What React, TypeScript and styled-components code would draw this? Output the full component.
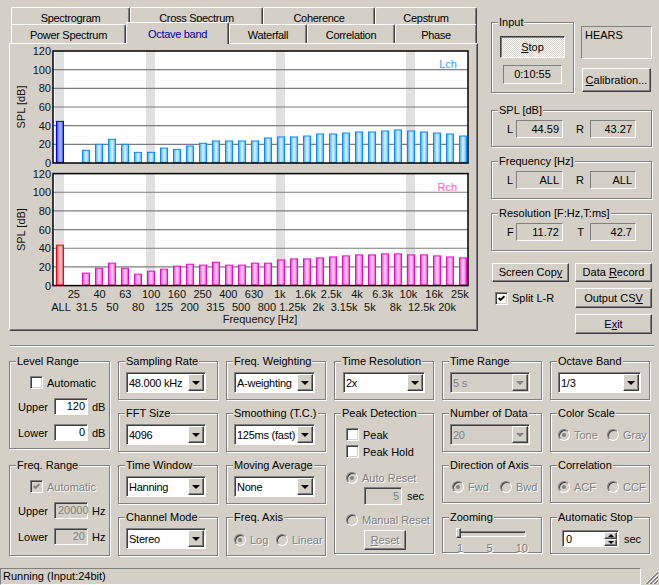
import React from 'react';
import styled, { createGlobalStyle, css } from 'styled-components';

const FACE = '#d4d0c8';
const SHADOW = '#808080';
const DARK = '#404040';

// 1/3 octave bands, first slot is the overall level
const BANDS = [
  'ALL', '25', '31.5', '40', '50', '63', '80', '100', '125', '160', '200', '250', '315', '400', '500', '630',
  '800', '1k', '1.25k', '1.6k', '2k', '2.5k', '3.15k', '4k', '5k', '6.3k', '8k', '10k', '12.5k', '16k', '20k', '25k',
];
const LCH = [
  44.6, 0, 13.6, 20, 25.4, 20, 11.4, 11.4, 16, 14.6, 18.2, 21.1, 23.6, 23.6, 23.6, 23.6,
  26.8, 27.9, 27.9, 28.9, 31.1, 31.1, 32.1, 33.2, 33.2, 34.3, 35.4, 34.3, 33.2, 32.1, 31.1, 28.9,
];
const RCH = [
  43.3, 0, 13.3, 18.6, 24, 18.6, 12.2, 15.4, 17.6, 20.8, 22.9, 21.9, 25, 21.9, 21.9, 24,
  24, 27.5, 28.6, 28.6, 29.7, 30.7, 31.8, 32.9, 32.9, 34, 34, 32.9, 32.9, 31.8, 30.7, 29.7,
];
const MARKED = [0, 7, 17, 27];

const GlobalStyle = createGlobalStyle`
  html, body { margin: 0; padding: 0; background: ${FACE}; }
  body { font-family: "Liberation Sans", Arial, sans-serif; font-size: 11px; color: #000; }
  * { box-sizing: border-box; }
`;

const raised = css`
  border: 1px solid;
  border-color: #fff ${DARK} ${DARK} #fff;
  box-shadow: inset -1px -1px ${SHADOW};
`;
const sunken = css`
  border: 1px solid;
  border-color: ${SHADOW} #fff #fff ${SHADOW};
  box-shadow: inset 1px 1px ${DARK};
`;
const thinSunken = css`
  border: 1px solid;
  border-color: ${SHADOW} #fff #fff ${SHADOW};
`;
const grayed = css`
  color: ${SHADOW};
  text-shadow: 1px 1px #fff;
`;

const Window = styled.div`
  width: 659px;
  height: 585px;
  display: flex;
  flex-direction: column;
  background: ${FACE};
  overflow: hidden;
`;

const TopArea = styled.div`
  display: flex;
  height: 345px;
  flex: none;
  padding: 7px 0 0 9px;
`;

/* ---------- tabs ---------- */

const TabControl = styled.div`
  width: 469px;
  display: flex;
  flex-direction: column;
`;

const TabRow = styled.div<{ $front?: boolean }>`
  display: flex;
  align-items: flex-end;
  padding-left: 2px;
  height: ${p => (p.$front ? 21 : 19)}px;
  ${p => p.$front && css`
    margin-top: -4px;
    position: relative;
    z-index: 1;
  `}
`;

const Tab = styled.div<{ $w: number; $active?: boolean }>`
  width: ${p => p.$w}px;
  height: ${p => (p.$active ? 22 : 19)}px;
  margin-bottom: ${p => (p.$active ? -1 : 0)}px;
  flex: none;
  background: ${FACE};
  border-top: 1px solid #fff;
  border-left: 1px solid #fff;
  border-right: 1px solid ${DARK};
  box-shadow: inset -1px 0 ${SHADOW};
  border-radius: 2px 2px 0 0;
  padding-top: ${p => (p.$active ? 5 : 4)}px;
  line-height: 13px;
  text-align: center;
  white-space: nowrap;
  letter-spacing: -0.3px;
  color: ${p => (p.$active ? '#0000a8' : '#000')};
`;

const TabPanel = styled.div`
  width: 469px;
  height: 288px;
  border: 1px solid;
  border-color: #fff ${DARK} ${DARK} #fff;
  box-shadow: inset -1px -1px ${SHADOW};
`;

const ChartSvg = styled.svg`
  display: block;
  font-family: "Liberation Sans", Arial, sans-serif;
  font-size: 11px;
  fill: #111;
`;

type Scheme = { stroke: string; grad: string; allStroke: string; allGrad: string; text: string };
const LEFT: Scheme = { stroke: '#0a88ff', grad: 'gBlue', allStroke: '#0000ff', allGrad: 'gBlueAll', text: '#3a9cff' };
const RIGHT: Scheme = { stroke: '#e010c0', grad: 'gPink', allStroke: '#ff0000', allGrad: 'gRedAll', text: '#ff5cc8' };

const PLOT_X = 53;
const PLOT_W = 415;
const PLOT_H = 112;
const DB = PLOT_H / 120;

const Plot: React.FC<{ top: number; values: number[]; scheme: Scheme; label: string }> = ({ top, values, scheme, label }) => {
  const base = top + PLOT_H;
  return (
    <g>
      <rect x={PLOT_X} y={top} width={PLOT_W} height={PLOT_H} fill="#fff" />
      {MARKED.map(i => (
        <rect key={i} x={55 + 13 * i} y={top} width={9} height={PLOT_H} fill="#e0e0e0" />
      ))}
      {[20, 40, 60, 80, 100].map(db => (
        <line key={db} x1={PLOT_X} x2={PLOT_X + PLOT_W} y1={base - db * DB} y2={base - db * DB} stroke="#7c7c7c" strokeWidth={1.2} />
      ))}
      {values.map((v, i) =>
        v > 0 ? (
          <rect
            key={i}
            x={56.5 + 13 * i}
            y={base - v * DB}
            width={7}
            height={v * DB - 0.6}
            fill={`url(#${i === 0 ? scheme.allGrad : scheme.grad})`}
            stroke={i === 0 ? scheme.allStroke : scheme.stroke}
          />
        ) : null,
      )}
      <rect x={PLOT_X} y={top} width={PLOT_W} height={PLOT_H} fill="none" stroke="#000" strokeWidth={1.5} />
      {[0, 20, 40, 60, 80, 100, 120].map(db => (
        <text key={db} x={51} y={base - db * DB + 4} textAnchor="end">{db}</text>
      ))}
      <text transform={`translate(25 ${top + 56}) rotate(-90)`} textAnchor="middle">SPL [dB]</text>
      <text x={457} y={top + 17} textAnchor="end" style={{ fill: scheme.text }}>{label}</text>
    </g>
  );
};

const Stripes: React.FC<{ id: string; edge: string; mid: string; light: string }> = ({ id, edge, mid, light }) => (
  <linearGradient id={id} x1="0" x2="1" y1="0" y2="0">
    <stop offset="0" stopColor={edge} />
    <stop offset="0.3" stopColor={mid} />
    <stop offset="0.5" stopColor={light} />
    <stop offset="0.75" stopColor={mid} />
    <stop offset="1" stopColor={edge} />
  </linearGradient>
);

const OctaveChart: React.FC = () => (
  <ChartSvg width={466} height={285} viewBox="10 44 466 285">
    <defs>
      <Stripes id="gBlue" edge="#38acff" mid="#9ad6ff" light="#dff3ff" />
      <Stripes id="gBlueAll" edge="#2a3cff" mid="#7c8cff" light="#b8c2ff" />
      <Stripes id="gPink" edge="#f030d0" mid="#ff98e8" light="#ffd6f6" />
      <Stripes id="gRedAll" edge="#ff3a5a" mid="#ff9aa8" light="#ffd0d4" />
    </defs>
    <Plot top={51} values={LCH} scheme={LEFT} label="Lch" />
    <Plot top={173.6} values={RCH} scheme={RIGHT} label="Rch" />
    {BANDS.map((b, i) => (
      <text key={b} x={61 + 12.87 * i} y={i % 2 ? 298 : 311} textAnchor="middle">{b}</text>
    ))}
    <text x={260} y={323} textAnchor="middle">Frequency [Hz]</text>
  </ChartSvg>
);

/* ---------- common controls ---------- */

const GroupBox = styled.div<{ $w?: number; $h: number; $mt?: number; $col?: number; $row?: number; $span?: number }>`
  position: relative;
  width: ${p => (p.$w ? `${p.$w}px` : '100%')};
  height: ${p => p.$h}px;
  margin-top: ${p => p.$mt ?? 0}px;
  flex: none;
  align-self: start;
  border: 1px solid ${SHADOW};
  box-shadow: inset 1px 1px #fff, 1px 1px #fff;
  ${p => p.$col && css`grid-column: ${p.$col};`}
  ${p => p.$row && css`grid-row: ${p.$row} / span ${p.$span ?? 1};`}
`;

const Caption = styled.span`
  position: absolute;
  top: -7px;
  left: 6px;
  padding: 0 1px;
  background: ${FACE};
  line-height: 13px;
  white-space: nowrap;
`;

const Button = styled.button<{ $w: number; $h: number; $pressed?: boolean }>`
  width: ${p => p.$w}px;
  height: ${p => p.$h}px;
  flex: none;
  margin: 0;
  padding: 0;
  font: inherit;
  color: #000;
  background: ${FACE};
  line-height: 13px;
  white-space: nowrap;
  ${p => (p.$pressed
    ? css`
      border: 1px solid;
      border-color: ${DARK} #fff #fff ${DARK};
      box-shadow: inset 1px 1px ${SHADOW};
      background: repeating-conic-gradient(#fff 0 25%, ${FACE} 0 50%) 0 0 / 2px 2px;
      padding-top: 1px;
    `
    : raised)}
  &:disabled {
    ${grayed}
  }
`;

const CheckBoxFrame = styled.span<{ $disabled?: boolean }>`
  width: 13px;
  height: 13px;
  flex: none;
  display: inline-flex;
  align-items: center;
  justify-content: center;
  border: 1px solid;
  border-color: ${SHADOW} #fff #fff ${SHADOW};
  box-shadow: inset 1px 1px ${DARK}, inset -1px -1px ${FACE};
  background: ${p => (p.$disabled ? FACE : '#fff')};
`;

const ChoiceRow = styled.div<{ $ml?: number; $mt?: number; $w?: number; $disabled?: boolean }>`
  display: flex;
  align-items: center;
  gap: 4px;
  height: 13px;
  flex: none;
  margin-left: ${p => p.$ml ?? 0}px;
  margin-top: ${p => p.$mt ?? 0}px;
  ${p => p.$w && css`width: ${p.$w}px;`}
  white-space: nowrap;
  ${p => p.$disabled && grayed}
`;

const Check: React.FC<{ label: string; checked?: boolean; disabled?: boolean; ml?: number; mt?: number }> = ({ label, checked, disabled, ml, mt }) => (
  <ChoiceRow $ml={ml} $mt={mt} $disabled={disabled}>
    <CheckBoxFrame $disabled={disabled}>
      {checked && (
        <svg width="7" height="7" viewBox="0 0 7 7">
          <polyline points="0.6,3 2.6,5 6.4,1.2" fill="none" stroke={disabled ? SHADOW : '#000'} strokeWidth={1.9} />
        </svg>
      )}
    </CheckBoxFrame>
    <span>{label}</span>
  </ChoiceRow>
);

const RadioCircle = styled.span<{ $disabled?: boolean }>`
  width: 12px;
  height: 12px;
  flex: none;
  border-radius: 50%;
  display: inline-flex;
  align-items: center;
  justify-content: center;
  border: 1px solid;
  border-color: ${SHADOW} #fff #fff ${SHADOW};
  box-shadow: inset 1px 1px ${DARK};
  background: ${p => (p.$disabled ? FACE : '#fff')};
`;

const RadioDot = styled.span`
  width: 4px;
  height: 4px;
  border-radius: 50%;
  background: ${SHADOW};
`;

const Radio: React.FC<{ label: string; on?: boolean; w?: number; ml?: number; mt?: number }> = ({ label, on, w, ml, mt }) => (
  <ChoiceRow $w={w} $ml={ml} $mt={mt} $disabled>
    <RadioCircle $disabled>{on && <RadioDot />}</RadioCircle>
    <span>{label}</span>
  </ChoiceRow>
);

const EditBox = styled.div<{ $w: number; $h?: number; $disabled?: boolean; $left?: boolean }>`
  width: ${p => p.$w}px;
  height: ${p => p.$h ?? 17}px;
  flex: none;
  ${sunken}
  background: ${p => (p.$disabled ? FACE : '#fff')};
  color: ${p => (p.$disabled ? SHADOW : '#000')};
  text-align: ${p => (p.$left ? 'left' : 'right')};
  padding: 0 2px 0 3px;
  line-height: ${p => (p.$h ?? 17) - 2}px;
`;

const ComboFrame = styled.div<{ $w: number; $disabled?: boolean }>`
  width: ${p => p.$w}px;
  height: 21px;
  display: flex;
  align-items: center;
  ${sunken}
  padding: 0 1px 0 2px;
  background: ${p => (p.$disabled ? FACE : '#fff')};
  color: ${p => (p.$disabled ? SHADOW : '#000')};
`;

const ComboText = styled.span`
  flex: 1;
  min-width: 0;
  white-space: nowrap;
  letter-spacing: -0.25px;
`;

const DropButton = styled.span`
  width: 16px;
  height: 17px;
  flex: none;
  display: flex;
  align-items: center;
  justify-content: center;
  background: ${FACE};
  ${raised}
`;

const Arrow = styled.span<{ $disabled?: boolean; $up?: boolean; $size?: number }>`
  width: 0;
  height: 0;
  border-left: ${p => p.$size ?? 4}px solid transparent;
  border-right: ${p => p.$size ?? 4}px solid transparent;
  ${p => (p.$up ? 'border-bottom' : 'border-top')}: ${p => p.$size ?? 4}px solid ${p => (p.$disabled ? SHADOW : '#000')};
`;

const Combo: React.FC<{ value: string; w?: number; disabled?: boolean }> = ({ value, w = 81, disabled }) => (
  <ComboFrame $w={w} $disabled={disabled}>
    <ComboText>{value}</ComboText>
    <DropButton>
      <Arrow $disabled={disabled} />
    </DropButton>
  </ComboFrame>
);

/* ---------- right panel ---------- */

const SidePanel = styled.div`
  width: 161px;
  margin-left: 13px;
  padding-top: 15px;
  display: flex;
  flex-direction: column;
`;

const InputRow = styled.div`
  display: flex;
  align-items: flex-start;
`;

const InputBody = styled.div`
  display: flex;
  flex-direction: column;
  align-items: center;
  gap: 7px;
  padding-top: 13px;
`;

const ClockBox = styled.div`
  width: 59px;
  height: 19px;
  ${thinSunken}
  text-align: center;
  line-height: 17px;
`;

const SideColumn = styled.div`
  display: flex;
  flex-direction: column;
  align-items: flex-start;
  margin-left: 7px;
  padding-top: 4px;
  gap: 9px;
`;

const NameBox = styled.div`
  width: 71px;
  height: 33px;
  ${thinSunken}
  padding: 2px 3px;
  line-height: 13px;
`;

const ReadoutRow = styled.div`
  display: flex;
  align-items: center;
  padding: 9px 0 0 15px;
`;

const ReadoutLabel = styled.span<{ $w: number; $right?: boolean }>`
  width: ${p => p.$w}px;
  flex: none;
  text-align: ${p => (p.$right ? 'right' : 'left')};
  padding-right: ${p => (p.$right ? 6 : 0)}px;
`;

const Readout = styled.div<{ $w: number }>`
  width: ${p => p.$w}px;
  height: 18px;
  flex: none;
  ${thinSunken}
  text-align: right;
  padding-right: 3px;
  line-height: 16px;
`;

const ActionGrid = styled.div`
  display: grid;
  grid-template-columns: 77px 77px;
  grid-template-rows: 19px 20px 20px;
  column-gap: 6px;
  row-gap: 6px;
  align-items: center;
  margin-top: 12px;
  padding-left: 1px;
`;

const ReadoutGroup: React.FC<{ title: string; a: [string, string]; b: [string, string]; mt: number; h: number }> = ({ title, a, b, mt, h }) => (
  <GroupBox $h={h} $mt={mt}>
    <Caption>{title}</Caption>
    <ReadoutRow>
      <ReadoutLabel $w={9}>{a[0]}</ReadoutLabel>
      <Readout $w={47}>{a[1]}</Readout>
      <ReadoutLabel $w={27} $right>{b[0]}</ReadoutLabel>
      <Readout $w={46}>{b[1]}</Readout>
    </ReadoutRow>
  </GroupBox>
);

/* ---------- lower settings ---------- */

const Separator = styled.div`
  height: 2px;
  flex: none;
  margin: 0 5px 0 10px;
  border-top: 1px solid ${SHADOW};
  border-bottom: 1px solid #fff;
`;

const ControlGrid = styled.div`
  display: grid;
  grid-template-columns: 101px repeat(5, 100px);
  grid-template-rows: repeat(4, 39px);
  column-gap: 8px;
  row-gap: 13px;
  margin-top: 14px;
  padding-left: 9px;
`;

const Body = styled.div<{ $pt: number; $pl: number; $row?: boolean }>`
  display: flex;
  flex-direction: ${p => (p.$row ? 'row' : 'column')};
  align-items: ${p => (p.$row ? 'center' : 'flex-start')};
  padding: ${p => p.$pt}px 0 0 ${p => p.$pl}px;
`;

const FieldRow = styled.div`
  display: flex;
  align-items: center;
  height: 17px;
  margin-top: 9px;
`;

const FieldLabel = styled.span`
  width: 36px;
  flex: none;
`;

const Unit = styled.span<{ $ml?: number; $disabled?: boolean }>`
  margin-left: ${p => p.$ml ?? 4}px;
  ${p => p.$disabled && grayed}
`;

const Indented = styled.div<{ $mt: number }>`
  display: flex;
  align-items: center;
  margin: ${p => p.$mt}px 0 0 18px;
`;

const SliderTrack = styled.div`
  position: relative;
  width: 70px;
  height: 10px;
  &::before {
    content: '';
    position: absolute;
    left: 0;
    right: 0;
    top: 3px;
    height: 4px;
    ${sunken}
    background: ${FACE};
  }
`;

const SliderThumb = styled.span`
  position: absolute;
  left: 0;
  top: 0;
  width: 5px;
  height: 10px;
  background: ${FACE};
  ${raised}
`;

const TickLabels = styled.div`
  display: flex;
  justify-content: space-between;
  width: 72px;
  margin-top: 4px;
  padding-left: 1px;
  ${grayed}
`;

const SpinFrame = styled.div`
  width: 57px;
  height: 17px;
  display: flex;
  ${sunken}
  background: #fff;
  padding: 1px 1px 0 3px;
`;

const SpinText = styled.span`
  flex: 1;
  line-height: 14px;
`;

const SpinButtons = styled.span`
  width: 13px;
  display: flex;
  flex-direction: column;
`;

const SpinHalf = styled.span`
  height: 7px;
  display: flex;
  align-items: center;
  justify-content: center;
  background: ${FACE};
  ${raised}
`;

const StatusBar = styled.div`
  margin-top: auto;
  height: 17px;
  flex: none;
  display: flex;
`;

const StatusPanel = styled.div`
  width: 641px;
  ${thinSunken}
  padding-left: 2px;
  line-height: 15px;
  white-space: nowrap;
`;

const SizeGrip: React.FC = () => (
  <svg width="18" height="17" viewBox="0 0 18 17">
    {[0, 4, 8].map(o => (
      <g key={o}>
        <line x1={17} y1={3 + o} x2={4 + o} y2={16} stroke="#fff" />
        <line x1={17} y1={4 + o} x2={5 + o} y2={16} stroke={SHADOW} />
        <line x1={17} y1={5 + o} x2={6 + o} y2={16} stroke={SHADOW} />
      </g>
    ))}
  </svg>
);

const App: React.FC = () => (
  <Window>
    <GlobalStyle />
    <TopArea>
      <TabControl>
        <TabRow>
          <Tab $w={119}>Spectrogram</Tab>
          <Tab $w={133}>Cross Spectrum</Tab>
          <Tab $w={112}>Coherence</Tab>
          <Tab $w={102}>Cepstrum</Tab>
        </TabRow>
        <TabRow $front>
          <Tab $w={115}>Power Spectrum</Tab>
          <Tab $w={103} $active>Octave band</Tab>
          <Tab $w={78}>Waterfall</Tab>
          <Tab $w={88}>Correlation</Tab>
          <Tab $w={82}>Phase</Tab>
        </TabRow>
        <TabPanel>
          <OctaveChart />
        </TabPanel>
      </TabControl>

      <SidePanel>
        <InputRow>
          <GroupBox $w={83} $h={71}>
            <Caption>Input</Caption>
            <InputBody>
              <Button $w={65} $h={22} $pressed><u>S</u>top</Button>
              <ClockBox>0:10:55</ClockBox>
            </InputBody>
          </GroupBox>
          <SideColumn>
            <NameBox>HEARS</NameBox>
            <Button $w={69} $h={24} style={{ marginLeft: 1 }}><u>C</u>alibration...</Button>
          </SideColumn>
        </InputRow>
        <ReadoutGroup title="SPL [dB]" a={['L', '44.59']} b={['R', '43.27']} mt={17} h={37} />
        <ReadoutGroup title="Frequency [Hz]" a={['L', 'ALL']} b={['R', 'ALL']} mt={14} h={38} />
        <ReadoutGroup title="Resolution [F:Hz,T:ms]" a={['F', '11.72']} b={['T', '42.7']} mt={14} h={38} />
        <ActionGrid>
          <Button $w={77} $h={19}>Screen Cop<u>y</u></Button>
          <Button $w={77} $h={19}>Data <u>R</u>ecord</Button>
          <Check label="Split L-R" checked ml={3} />
          <Button $w={77} $h={20}>Output CS<u>V</u></Button>
          <span />
          <Button $w={77} $h={20}>E<u>x</u>it</Button>
        </ActionGrid>
      </SidePanel>
    </TopArea>

    <Separator />

    <ControlGrid>
      <GroupBox $col={1} $row={1} $span={2} $h={88}>
        <Caption>Level Range</Caption>
        <Body $pt={14} $pl={8}>
          <Check label="Automatic" ml={12} />
          <FieldRow>
            <FieldLabel>Upper</FieldLabel>
            <EditBox $w={34}>120</EditBox>
            <Unit>dB</Unit>
          </FieldRow>
          <FieldRow>
            <FieldLabel>Lower</FieldLabel>
            <EditBox $w={34}>0</EditBox>
            <Unit>dB</Unit>
          </FieldRow>
        </Body>
      </GroupBox>
      <GroupBox $col={1} $row={3} $span={2} $h={91}>
        <Caption>Freq. Range</Caption>
        <Body $pt={14} $pl={8}>
          <Check label="Automatic" checked disabled ml={12} />
          <FieldRow>
            <FieldLabel>Upper</FieldLabel>
            <EditBox $w={34} $disabled>20000</EditBox>
            <Unit>Hz</Unit>
          </FieldRow>
          <FieldRow>
            <FieldLabel>Lower</FieldLabel>
            <EditBox $w={34} $disabled>20</EditBox>
            <Unit>Hz</Unit>
          </FieldRow>
        </Body>
      </GroupBox>

      <GroupBox $col={2} $row={1} $h={39}>
        <Caption>Sampling Rate</Caption>
        <Body $pt={10} $pl={7}><Combo value="48.000 kHz" w={80} /></Body>
      </GroupBox>
      <GroupBox $col={2} $row={2} $h={39}>
        <Caption>FFT Size</Caption>
        <Body $pt={10} $pl={7}><Combo value="4096" w={80} /></Body>
      </GroupBox>
      <GroupBox $col={2} $row={3} $h={39}>
        <Caption>Time Window</Caption>
        <Body $pt={10} $pl={7}><Combo value="Hanning" w={80} /></Body>
      </GroupBox>
      <GroupBox $col={2} $row={4} $h={39}>
        <Caption>Channel Mode</Caption>
        <Body $pt={10} $pl={7}><Combo value="Stereo" w={80} /></Body>
      </GroupBox>

      <GroupBox $col={3} $row={1} $h={39}>
        <Caption>Freq. Weighting</Caption>
        <Body $pt={10} $pl={7}><Combo value="A-weighting" w={81} /></Body>
      </GroupBox>
      <GroupBox $col={3} $row={2} $h={39}>
        <Caption>Smoothing (T.C.)</Caption>
        <Body $pt={10} $pl={7}><Combo value="125ms (fast)" w={81} /></Body>
      </GroupBox>
      <GroupBox $col={3} $row={3} $h={39}>
        <Caption>Moving Average</Caption>
        <Body $pt={10} $pl={7}><Combo value="None" w={81} /></Body>
      </GroupBox>
      <GroupBox $col={3} $row={4} $h={39}>
        <Caption>Freq. Axis</Caption>
        <Body $pt={15} $pl={7} $row>
          <Radio label="Log" on w={42} />
          <Radio label="Linear" />
        </Body>
      </GroupBox>

      <GroupBox $col={4} $row={1} $h={39}>
        <Caption>Time Resolution</Caption>
        <Body $pt={10} $pl={8}><Combo value="2x" w={82} /></Body>
      </GroupBox>
      <GroupBox $col={4} $row={2} $span={3} $h={141}>
        <Caption>Peak Detection</Caption>
        <Body $pt={14} $pl={11}>
          <Check label="Peak" />
          <Check label="Peak Hold" mt={4} />
          <Radio label="Auto Reset" on mt={13} />
          <Indented $mt={3}>
            <EditBox $w={38} $h={18} $disabled>5</EditBox>
            <Unit $ml={5}>sec</Unit>
          </Indented>
          <Radio label="Manual Reset" mt={8} />
          <Indented $mt={4}>
            <Button $w={42} $h={20} disabled><u>R</u>eset</Button>
          </Indented>
        </Body>
      </GroupBox>

      <GroupBox $col={5} $row={1} $h={39}>
        <Caption>Time Range</Caption>
        <Body $pt={10} $pl={7}><Combo value="5 s" w={80} disabled /></Body>
      </GroupBox>
      <GroupBox $col={5} $row={2} $h={39}>
        <Caption>Number of Data</Caption>
        <Body $pt={10} $pl={7}><Combo value="20" w={80} disabled /></Body>
      </GroupBox>
      <GroupBox $col={5} $row={3} $h={38}>
        <Caption>Direction of Axis</Caption>
        <Body $pt={14} $pl={9} $row>
          <Radio label="Fwd" on w={48} />
          <Radio label="Bwd" />
        </Body>
      </GroupBox>
      <GroupBox $col={5} $row={4} $h={36}>
        <Caption>Zooming</Caption>
        <Body $pt={10} $pl={13}>
          <SliderTrack><SliderThumb /></SliderTrack>
          <TickLabels><span>1</span><span>5</span><span>10</span></TickLabels>
        </Body>
      </GroupBox>

      <GroupBox $col={6} $row={1} $h={39}>
        <Caption>Octave Band</Caption>
        <Body $pt={10} $pl={7}><Combo value="1/3" w={83} /></Body>
      </GroupBox>
      <GroupBox $col={6} $row={2} $h={39}>
        <Caption>Color Scale</Caption>
        <Body $pt={14} $pl={7} $row>
          <Radio label="Tone" on w={49} />
          <Radio label="Gray" />
        </Body>
      </GroupBox>
      <GroupBox $col={6} $row={3} $h={38}>
        <Caption>Correlation</Caption>
        <Body $pt={14} $pl={7} $row>
          <Radio label="ACF" on w={49} />
          <Radio label="CCF" />
        </Body>
      </GroupBox>
      <GroupBox $col={6} $row={4} $h={37}>
        <Caption>Automatic Stop</Caption>
        <Body $pt={12} $pl={11} $row>
          <SpinFrame>
            <SpinText>0</SpinText>
            <SpinButtons>
              <SpinHalf><Arrow $up $size={3} /></SpinHalf>
              <SpinHalf><Arrow $size={3} /></SpinHalf>
            </SpinButtons>
          </SpinFrame>
          <Unit $ml={5}>sec</Unit>
        </Body>
      </GroupBox>
    </ControlGrid>

    <StatusBar>
      <StatusPanel>Running (Input:24bit)</StatusPanel>
      <SizeGrip />
    </StatusBar>
  </Window>
);

export default App;
